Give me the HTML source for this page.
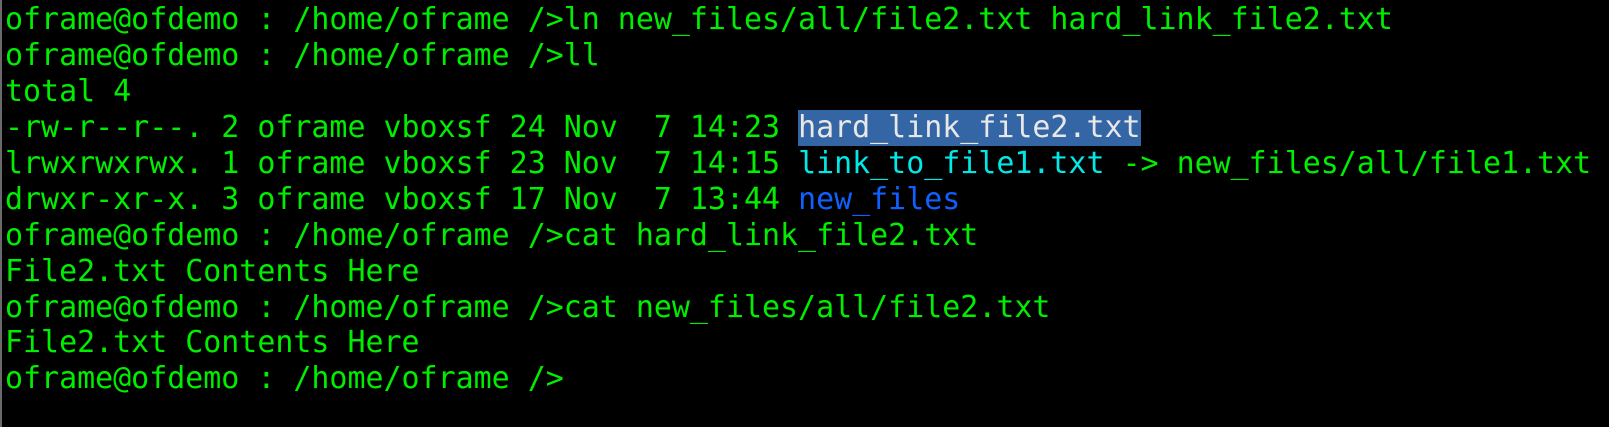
<!DOCTYPE html>
<html><head><style>
html,body{margin:0;padding:0;background:#000;width:1609px;height:427px;overflow:hidden}
body{border-left:2px solid #6a6a6a;box-sizing:border-box}
.t{padding:2px 0 0 3px;font-family:"DejaVu Sans Mono","Liberation Mono",monospace;font-size:29.95px;color:#00ee00}
.t div{height:35.95px;line-height:35.95px;white-space:pre}
.h{background:#3465a4;color:#e8e8e8;display:inline-block;height:35.95px}
.c{color:#00e8e8}
.b{color:#1060ff}
</style></head><body><div class="t">
<div>oframe@ofdemo : /home/oframe />ln new_files/all/file2.txt hard_link_file2.txt</div>
<div>oframe@ofdemo : /home/oframe />ll</div>
<div>total 4</div>
<div>-rw-r--r--. 2 oframe vboxsf 24 Nov  7 14:23 <span class="h">hard_link_file2.txt</span></div>
<div>lrwxrwxrwx. 1 oframe vboxsf 23 Nov  7 14:15 <span class="c">link_to_file1.txt</span> -&gt; new_files/all/file1.txt</div>
<div>drwxr-xr-x. 3 oframe vboxsf 17 Nov  7 13:44 <span class="b">new_files</span></div>
<div>oframe@ofdemo : /home/oframe />cat hard_link_file2.txt</div>
<div>File2.txt Contents Here</div>
<div>oframe@ofdemo : /home/oframe />cat new_files/all/file2.txt</div>
<div>File2.txt Contents Here</div>
<div>oframe@ofdemo : /home/oframe /></div>
</div></body></html>
